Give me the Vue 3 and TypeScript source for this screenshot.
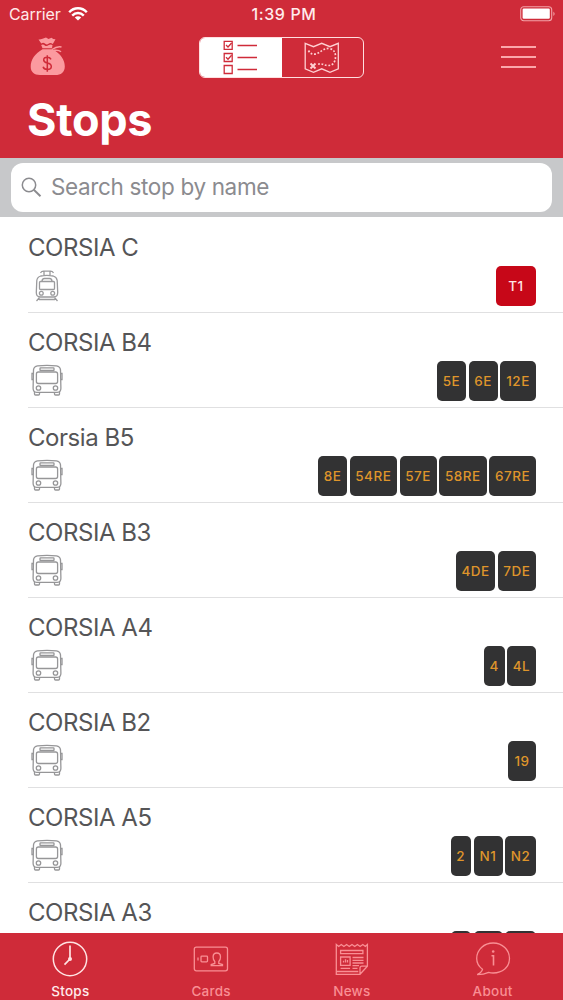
<script setup lang="ts">
interface Badge { label: string; width: number; red?: boolean }
interface Stop { name: string; kind: 'tram' | 'bus'; lines: Badge[] }

const b = (label: string, width: number, red = false): Badge => ({ label, width, red })

const stops: Stop[] = [
  { name: 'CORSIA C', kind: 'tram', lines: [b('T1', 40, true)] },
  { name: 'CORSIA B4', kind: 'bus', lines: [b('5E', 29), b('6E', 29), b('12E', 36)] },
  { name: 'Corsia B5', kind: 'bus', lines: [b('8E', 29), b('54RE', 47.5), b('57E', 37), b('58RE', 47.5), b('67RE', 47)] },
  { name: 'CORSIA B3', kind: 'bus', lines: [b('4DE', 39), b('7DE', 38.5)] },
  { name: 'CORSIA A4', kind: 'bus', lines: [b('4', 20.5), b('4L', 29)] },
  { name: 'CORSIA B2', kind: 'bus', lines: [b('19', 28)] },
  { name: 'CORSIA A5', kind: 'bus', lines: [b('2', 20.5), b('N1', 29), b('N2', 31)] },
  { name: 'CORSIA A3', kind: 'bus', lines: [b('', 20.5), b('', 29), b('', 31)] },
]
</script>

<template>
  <div class="screen">
    <header class="header">
      <div class="status">
        <div class="carrier">
          <span class="carrier-name">Carrier</span>
          <svg width="20" height="14" viewBox="0 0 20 14" fill="none" stroke="#fff" stroke-width="2.4">
            <path d="M1.2 5.2C6-.1 14-.1 18.8 5.2" />
            <path d="M4.2 8.6c3.4-3.5 8.2-3.5 11.6 0" />
            <path d="M6.8 10.5c1.9-1.8 4.5-1.8 6.4 0L10 13.6z" fill="#fff" stroke="none" />
          </svg>
        </div>
        <span class="time">1:39 PM</span>
        <svg class="battery" width="35" height="16" viewBox="0 0 35 16">
          <rect x=".7" y=".7" width="31" height="14" rx="3" fill="none" stroke="#f3a3a8" stroke-width="1.1" />
          <rect x="2.6" y="2.6" width="27.2" height="10.2" rx="1.2" fill="#fff" />
          <path d="M33.4 5.4q2.4 2.3 0 4.6z" fill="#f3a3a8" />
        </svg>
      </div>
      <div class="toolbar">
        <svg class="bag" width="36" height="40" viewBox="0 0 36 40">
          <path d="M8.5 2.5q2 .2 4-.8L16 .5l2.500 1.400L21.500 .8q1.500 1.500 4 1.500L22.800 7q-2.500-2-4.300-.2-2 1.500-4-.5-1.500-1-3.200.3z" fill="#fb9a9f" />
          <path d="M11.200 8q2-1 3.600.4 1.700 1.300 4-.3 2-1.300 3.700 0L22 11.200H12.500z" fill="#fb9a9f" />
          <path d="M12.500 12.300h10C31 17 34.800 23 34.800 29.500c0 6-4 8.500-9.500 8.500H10C4 38 .7 35 .7 29.500c0-7 4.500-13 11.800-17.200z" fill="#fb9a9f" />
          <path d="M22 12.500q5-3.500 9.500-2.500M24 13.300q5-.5 7 1.500" fill="none" stroke="#fb9a9f" stroke-width="1.500" />
          <path d="M21 22.300q-1-2-3.700-2-3.600 0-3.600 2.700 0 2.200 3.600 3 4 .8 4 3.400 0 3-4 3-3.500 0-4.200-2.700M17.300 18.200v16.500" fill="none" stroke="#cf2b39" stroke-width="1.500" />
        </svg>
        <div class="segment">
          <div class="seg active">
            <svg width="35" height="35" viewBox="0 0 35 35" fill="none" stroke="#cf2b39" stroke-width="1.300">
              <path d="M1.200 1.300h8v8h-8zM1.200 13.500h8v8h-8zM1.200 25.500h8v8h-8z" />
              <path d="M3 5l2 2 3.600-4M3 17.300l2 2 3.600-4M14.500 5.500h19.500M14.500 17.500h19.500M14.500 29.500h19.500" />
            </svg>
          </div>
          <div class="seg">
            <svg width="36" height="32" viewBox="0 0 36 32" fill="none" stroke="#ffd0d2" stroke-width="1.300">
              <path d="M1.200 1.300l8.300 3.400 8.200-3.400L26 4.700l8.300-3.400v25.500L26 30.300l-8.300-3.500-8.200 3.500-8.300-3.500z" />
              <path d="M4.500 8.500q2 4 6 3.700C16 11.500 19 6 25 6.500q6.500 1 6.500 8c0 6-3 9-7.500 9-4 0-6.500-3-11-.8" stroke-width="1.700" stroke-dasharray="1.800 1.700" />
              <path d="M6.500 21.500l5 5m0-5l-5 5" stroke-width="1.900" />
            </svg>
          </div>
        </div>
        <div class="menu"><i></i><i></i><i></i></div>
      </div>
      <h1 class="title">Stops</h1>
    </header>

    <div class="search">
      <div class="field">
        <svg width="21" height="21" viewBox="0 0 21 21" fill="none" stroke="#8b8b8f" stroke-width="1.500">
          <circle cx="8" cy="8" r="6.700" /><path d="M12.800 12.800l6.700 6.500" stroke-width="1.900" />
        </svg>
        <span class="placeholder">Search stop by name</span>
      </div>
    </div>

    <main class="list">
      <div v-for="stop in stops" :key="stop.name" class="row">
        <div class="name">{{ stop.name }}</div>
        <div class="detail">
          <svg v-if="stop.kind === 'tram'" class="vehicle" width="38" height="34" viewBox="0 0 38 34" fill="none" stroke="#9b9b9d" stroke-width="1.300">
            <path d="M12.500 4q1-1.800 3-1.800h7q2 0 3 1.800M16 2.500v4M22 2.500v4M12.800 7q6-1.200 12.400 0 3.500 1 4 4.500l.5 12c0 3-1.500 4.500-4 4.500H12.300c-2.500 0-4-1.500-4-4.500l.5-12q.5-3.500 4-4.500zM14 12.500q0-3 2.500-3h5q2.500 0 2.500 3" />
            <rect x="11.500" y="12.500" width="15" height="8" rx="1" />
            <circle cx="13.300" cy="24.300" r="1.900" /><circle cx="24.700" cy="24.300" r="1.900" />
            <path d="M11.500 28.500L8.500 32M26.500 28.500l3 3.500M11 30.500h16" />
          </svg>
          <svg v-else class="vehicle" width="38" height="34" viewBox="0 0 38 34" fill="none" stroke="#969698" stroke-width="1.300">
            <path d="M9.500 1.800q9.500-1 19 0 3.500.5 4 4l.4 18.500q0 4-3.500 4H8.600q-3.500 0-3.500-4L5.500 5.800q.5-3.500 4-4z" />
            <rect x="12" y="3.800" width="14" height="2.700" rx=".6" />
            <rect x="8.400" y="8" width="21.200" height="11.500" rx="2" />
            <circle cx="10.500" cy="24" r="2.200" /><circle cx="27.500" cy="24" r="2.200" />
            <path d="M5 9.500H4v6H5M33 9.500h1v6H33M6.500 28v2q0 1 1 1h3q1 0 1-1v-2M26.500 28v2q0 1 1 1h3q1 0 1-1v-2" />
          </svg>
          <div class="badges">
            <span v-for="(line, i) in stop.lines" :key="i" class="badge" :class="{ red: line.red }" :style="{ width: line.width + 'px' }">{{ line.label }}</span>
          </div>
        </div>
      </div>
    </main>

    <nav class="tabs">
      <div class="tab current">
        <svg width="38" height="38" viewBox="0 0 38 38" fill="none" stroke="#ffe2e2" stroke-width="1.500">
          <circle cx="19" cy="19" r="16.700" /><path d="M19 5.500V19l-5.500 5.700" stroke-width="1.700" /><circle cx="19" cy="19" r="2" fill="#ffe2e2" stroke="none" />
        </svg>
        <span>Stops</span>
      </div>
      <div class="tab">
        <svg width="38" height="38" viewBox="0 0 38 38" fill="none" stroke="#f98f94" stroke-width="1.300">
          <rect x="2.300" y="7.200" width="33.200" height="23.600" rx="2" />
          <rect x="9" y="16.200" width="6.500" height="5.600" rx=".8" /><path d="M6 17.500v3" />
          <path d="M22.800 23.500v-2q-1.700-1.500-1.700-4.500 0-4 3.700-4t3.700 4q0 3-1.700 4.500v2l3.700 1v1.200H19.200v-1.200z" />
        </svg>
        <span>Cards</span>
      </div>
      <div class="tab">
        <svg width="38" height="38" viewBox="0 0 38 38" fill="none" stroke="#f98f94" stroke-width="1.300">
          <path d="M3.300 4.500l2.400 2 2.600-2 2.600 2 2.700-2 2.700 2 2.700-2 2.700 2 2.700-2 2.700 2 2.700-2 2.500 2 2.100-2v21.700L27 34.300H3.300zM27 34.300v-6q0-2.100 2-2.100h5.400M3.300 31.500h22" />
          <path d="M7.600 10.500h22.300v3.200H7.600zM7.600 17h9.500v8.300H7.600zM10.500 22.500v-1.700M12.500 22.500v-3.200M14.500 22.500v-2.500M19.500 17.500h11M19.500 20.300h11M19.500 23h11M19.500 25.700h6.500M7.600 28.300h9.500M19.500 28.300h5" />
        </svg>
        <span>News</span>
      </div>
      <div class="tab">
        <svg width="38" height="38" viewBox="0 0 38 38" fill="none" stroke="#f98f94" stroke-width="1.300">
          <path d="M8.500 29.300C4.700 26.500 2.700 22.700 2.700 18.500 2.700 9.800 10 3 19.200 3s16.300 6.800 16.300 15.500S28.400 33 19.200 33q-2.500 0-4.500-.6-5 2.200-11.500 2.300 4.700-2.400 5.300-5.400z" />
          <path d="M17.500 15.800h2V25.500" stroke-width="1.600" /><circle cx="19.200" cy="11.500" r="1.300" fill="#f98f94" stroke="none" />
        </svg>
        <span>About</span>
      </div>
    </nav>
  </div>
</template>

<style>
body { margin: 0; background: #fff; }
</style>

<style scoped>
.screen { width: 563px; height: 1000px; display: flex; flex-direction: column; overflow: hidden; background: #fff; font-family: Inter, "Liberation Sans", sans-serif; }
.header { flex: none; height: 158px; background: #cf2b39; color: #fff; }
.status { display: grid; grid-template-columns: 1fr auto 1fr; align-items: center; height: 28px; padding: 0 8px 0 9px; }
.carrier { display: flex; align-items: center; gap: 8px; }
.carrier-name { width: 51px; font-size: 16px; line-height: 20px; letter-spacing: -.1px; color: #ffe9e9; white-space: nowrap; }
.time { font-size: 16px; font-weight: 500; line-height: 20px; letter-spacing: .6px; color: #ffecec; padding-left: 4px; }
.battery { justify-self: end; }
.toolbar { display: grid; grid-template-columns: 1fr 165px 1fr; align-items: start; padding: 9px 27px 0 28px; height: 50px; margin-left: -1px; }
.bag { margin-left: 3px; }
.segment { display: flex; box-sizing: border-box; height: 41px; border: 1.500px solid #ffdfe0; border-radius: 6px; overflow: hidden; }
.seg { flex: 1; display: flex; align-items: center; justify-content: center; }
.active { background: #fff; }
.menu { justify-self: end; display: flex; flex-direction: column; gap: 8px; padding-top: 9px; }
.menu i { width: 35px; height: 2px; background: #fba6aa; }
.title { margin: 4px 0 0 27px; font-size: 45px; line-height: 58px; font-weight: 700; letter-spacing: -.3px; }
.search { flex: none; height: 59px; box-sizing: border-box; padding: 5px 11px; background: #c7c8ca; }
.field { height: 49px; display: flex; align-items: center; border-radius: 12px; background: #fff; padding-left: 10px; gap: 9px; }
.placeholder { font-size: 22.500px; line-height: 30px; letter-spacing: -.35px; color: #8b8b8f; white-space: nowrap; padding-bottom: 1px; }
.list { flex: 1; min-height: 0; overflow: hidden; }
.list::before { content: ""; display: block; height: 1px; }
.row { height: 95px; box-sizing: border-box; margin-left: 28px; padding: 14px 27px 0 0; border-bottom: 1px solid #e0e0e1; }
.name { height: 32px; font-size: 24px; line-height: 32px; letter-spacing: -.45px; color: #555557; white-space: nowrap; }
.detail { display: flex; justify-content: space-between; align-items: flex-start; margin-top: 2px; }
.vehicle { margin-top: 3px; }
.badges { display: flex; gap: 2.500px; }
.badge { display: flex; align-items: center; justify-content: center; height: 39.500px; border-radius: 5px; background: #323233; color: #df952b; font-size: 13.500px; font-weight: 500; letter-spacing: .5px; }
.badge.red { background: #c70718; color: #ffe3e3; }
.tabs { flex: none; height: 67px; display: grid; grid-template-columns: repeat(4, 1fr); background: #cf2b39; }
.tab { display: flex; flex-direction: column; align-items: center; padding-top: 7px; color: #f98f94; font-size: 13.500px; font-weight: 500; letter-spacing: .25px; }
.tab span { line-height: 18px; margin-top: 4px; }
.current { color: #ffecec; }
</style>
